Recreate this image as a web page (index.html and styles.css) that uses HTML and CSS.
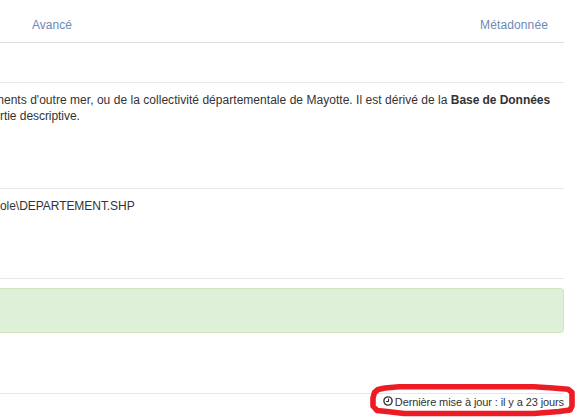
FILE: index.html
```html
<!DOCTYPE html>
<html lang="fr">
<head>
<meta charset="utf-8">
<title>Métadonnée</title>
<link rel="stylesheet" href="styles.css">
</head>
<body>
<main class="page">
  <nav class="tabs">
    <a class="tab tab-advanced">Avancé</a>
    <a class="tab tab-metadata">Métadonnée</a>
  </nav>
  <div class="spacer"></div>
  <section class="description">
    <p class="line first">ments d'outre mer, ou de la collectivité départementale de Mayotte. Il est dérivé de la <b>Base de Données</b></p>
    <p class="line second">rtie descriptive.</p>
  </section>
  <section class="source"><p class="line path">ole\DEPARTEMENT.SHP</p></section>
  <div class="alert"></div>
  <footer class="footer">
    <svg class="clock" viewBox="0 0 10 10"><circle cx="5" cy="5" r="4.1"/><path d="M5.5 2.5V5.5H3"/></svg>
    <span class="updated">Dernière mise à jour : il y a 23 jours</span>
    <svg class="ring" viewBox="0 0 208 36"><path d="M9 5.5L16 4L30 2.8H165L184 4L199 5.2L203 8.5V22L201 26L190 27.5L165 29.5H35L18 27.5L8 26.5L4 22V14L5.5 8.5Z"/></svg>
  </footer>
</main>
</body>
</html>
```
FILE: styles.css
```css
* { box-sizing: border-box; }
body {
  margin: 0;
  background: #fff;
  color: #333;
  font: 12px/16px "Liberation Sans", Arial, sans-serif;
  overflow: hidden;
}
.page { width: 564px; height: 420px; }
.tabs {
  display: flex;
  justify-content: space-between;
  height: 43px;
  padding: 17px 16px 0 32px;
  border-bottom: 1px solid #ddd;
}
.tab { color: #6b8ab4; }
.tab-metadata { letter-spacing: 0.12px; }
.spacer { height: 40px; border-bottom: 1px solid #e7e7e7; }
.description {
  height: 106px;
  padding: 9px 14px 0 0;
  border-bottom: 1px solid #e7e7e7;
}
.line { margin: 0; white-space: nowrap; }
.first { display: flex; justify-content: flex-end; white-space: pre; letter-spacing: 0.035px; }
.first b { letter-spacing: -0.06px; }
.second, .path { letter-spacing: -0.05px; }
.source {
  height: 90px;
  padding-top: 9px;
  border-bottom: 1px solid #e7e7e7;
}
.alert {
  height: 45px;
  margin-top: 9px;
  background: #dff0d8;
  border: 1px solid #d0e6be;
  border-left: 0;
  border-radius: 0 4px 4px 0;
}
.footer {
  position: relative;
  display: flex;
  justify-content: flex-end;
  gap: 2px;
  height: 27px;
  margin-top: 60px;
  border-top: 1px solid #e7e7e7;
  font-size: 11px;
}
.updated { letter-spacing: -0.1px; }
.clock { width: 10px; height: 10px; margin-top: 2px; fill: none; stroke: #333; stroke-width: 1.4; }
.clock path { stroke-width: 1.1; }
.ring {
  position: absolute;
  left: 369px;
  top: -10px;
  width: 208px;
  height: 36px;
  fill: none;
  stroke: #ed1c24;
  stroke-width: 5.6;
  stroke-linejoin: round;
}
```
